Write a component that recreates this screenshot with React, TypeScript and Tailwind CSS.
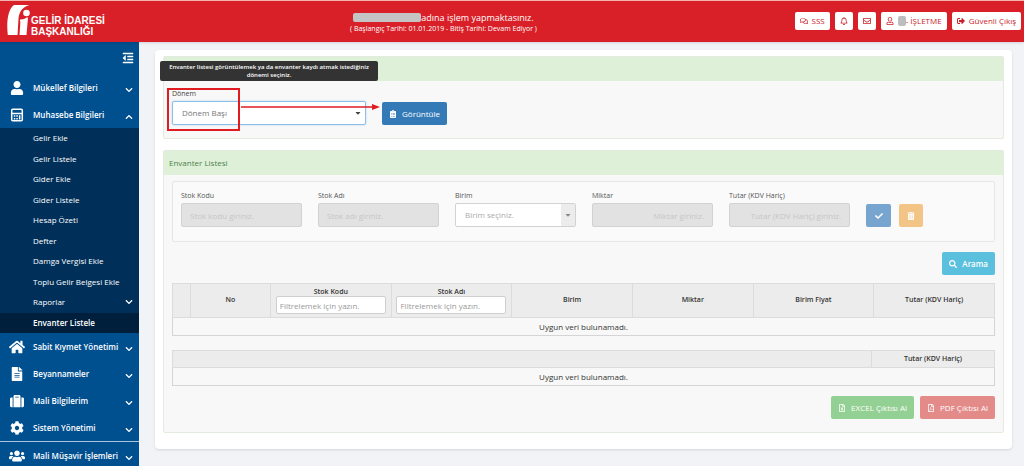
import React from "react";
import {
  FaUser, FaHome, FaSuitcase, FaCog, FaUsers, FaOutdent, FaRegComments,
  FaRegBell, FaRegEnvelope, FaRegUser, FaCheck, FaSearch, FaChevronDown, FaChevronUp,
  FaRegFileExcel, FaRegFilePdf, FaCaretDown, FaClipboardList, FaFileAlt, FaSignOutAlt, FaTrashAlt,
} from "react-icons/fa";

function Logo() {
  return (
    <a href="#" className="flex items-start text-white">
      <svg viewBox="0 0 24 32" className="h-8 w-6" aria-hidden="true">
        <path d="M7 1h15.500c-6 1.500-10.300 6-11 13.500L10.500 31H.8C-.6 19 .4 6 7 1z" fill="#fff" />
        <circle cx="19.500" cy="9" r="3.300" fill="#fff" />
        <path d="M13 15.500c3 .2 5-.8 6.500-2h1.500L19.500 31h-7l.9-13.500H13z" fill="#fff" />
      </svg>
      <span className="mt-[11px] flex flex-col font-['Liberation_Sans',sans-serif] text-[10px] leading-[11px] font-bold">
        <span>GELİR İDARESİ</span>
        <span>BAŞKANLIĞI</span>
      </span>
    </a>
  );
}

function CalculatorIcon({ className }: { className?: string }) {
  return (
    <svg viewBox="0 0 14 14" className={className} aria-hidden="true">
      <rect x="1.700" y="1.200" width="10.600" height="11.600" rx="1" fill="none" stroke="currentColor" strokeWidth="1.500" />
      <path d="M2 5.500h10" stroke="currentColor" strokeWidth="1.500" />
      <path
        d="M3.800 7.200h1.500v1.500H3.800zM6.300 7.200h1.500v1.500H6.300zM8.900 7.200h1.500v4.400H8.900zM3.800 10h1.500v1.500H3.800zM6.300 10h1.500v1.500H6.300z"
        fill="currentColor"
      />
    </svg>
  );
}

const headerButton =
  "flex h-[18px] items-center gap-1 rounded-xs bg-white px-[5px] text-[8px] font-medium text-[#c9222b]";

function Header() {
  return (
    <header className="relative z-10 grid h-[42px] shrink-0 grid-cols-[1fr_auto_1fr] border-t border-[#f3b3ae] bg-[#d91f27] shadow-sm">
      <div className="pt-[3px] pl-[7px]">
        <Logo />
      </div>
      <div className="flex flex-col items-center pt-2.5 pr-[137px] text-white">
        <p className="flex items-center text-[9px] leading-[13px]">
          <span className="h-[9px] w-[68px] rounded-xs bg-[#c4c4c4]" />
          <span>adına işlem yapmaktasınız.</span>
        </p>
        <p className="text-[7px] leading-[10px] font-medium">( Başlangıç Tarihi: 01.01.2019 - Bitiş Tarihi: Devam Ediyor )</p>
      </div>
      <div className="flex items-start justify-end gap-[5px] pt-[11px] pr-[3px]">
        <button className={headerButton}><FaRegComments className="size-2" />SSS</button>
        <button className={headerButton} aria-label="Bildirimler"><FaRegBell className="size-2" /></button>
        <button className={headerButton} aria-label="Mesajlar"><FaRegEnvelope className="size-2" /></button>
        <button className={headerButton}>
          <FaRegUser className="size-2" />
          <span className="flex items-center"><span className="h-2.5 w-2 rounded-xs bg-[#bdbdbd]" />- İŞLETME</span>
        </button>
        <button className={headerButton}><FaSignOutAlt className="size-2" />Güvenli Çıkış</button>
      </div>
    </header>
  );
}

type Icon = React.ComponentType<{ className?: string }>;

function MenuItem({ icon: Icon, label, open }: { icon: Icon; label: string; open?: boolean }) {
  const Chevron = open ? FaChevronUp : FaChevronDown;
  return (
    <a href="#" className="flex h-[27px] items-center pr-1.5 pl-[9px] font-semibold">
      <span className="flex w-4 justify-center">
        <Icon className={Icon === FaUsers || Icon === FaHome ? "size-4" : "size-3.5"} />
      </span>
      <span className="ml-2 grow">{label}</span>
      <Chevron className="mt-1 size-2" />
    </a>
  );
}

const subItems = [
  "Gelir Ekle", "Gelir Listele", "Gider Ekle", "Gider Listele", "Hesap Özeti", "Defter",
  "Damga Vergisi Ekle", "Toplu Gelir Belgesi Ekle", "Raporlar", "Envanter Listele",
];

function Sidebar() {
  return (
    <nav className="w-[139px] shrink-0 bg-[#00508f] text-[8px] whitespace-nowrap text-white">
      <div className="flex h-8 items-center justify-end pr-[5px]">
        <button aria-label="Menüyü daralt"><FaOutdent className="size-3" /></button>
      </div>
      <MenuItem icon={FaUser} label="Mükellef Bilgileri" />
      <MenuItem icon={CalculatorIcon} label="Muhasebe Bilgileri" open />
      <div className="grid h-[205px] auto-rows-fr bg-[#00305a]">
        {subItems.map((item) => (
          <a
            key={item}
            href="#"
            className={
              item === "Envanter Listele"
                ? "flex items-center bg-[#001f3c] pr-1.5 pl-[33px] font-semibold"
                : "flex items-center justify-between pr-1.5 pl-[33px]"
            }
          >
            {item}
            {item === "Raporlar" && <FaChevronDown className="size-2" />}
          </a>
        ))}
      </div>
      <MenuItem icon={FaHome} label="Sabit Kıymet Yönetimi" />
      <MenuItem icon={FaFileAlt} label="Beyannameler" />
      <MenuItem icon={FaSuitcase} label="Mali Bilgilerim" />
      <MenuItem icon={FaCog} label="Sistem Yönetimi" />
      <div className="border-t border-[#a9c4dc]">
        <MenuItem icon={FaUsers} label="Mali Müşavir İşlemleri" />
      </div>
    </nav>
  );
}

const actionButton = "flex h-[23px] items-center gap-[5px] rounded-xs px-[7px] text-[8px] text-white";

function PeriodPanel() {
  return (
    <section className="rounded-xs border border-[#e3ebdf] bg-[#f8f8f8]">
      <div className="h-6 bg-[#dff0d8]" />
      <div className="relative flex h-[57px] items-end gap-4 pb-[13px] pl-2">
        <div className="w-[194px]">
          <label htmlFor="donem" className="block text-[7px] leading-[14px] text-[#444]">Dönem</label>
          <div className="relative">
            <select
              id="donem"
              className="block h-6 w-full appearance-none rounded-xs border border-[#8ebfe8] bg-white pl-[9px] text-[8px] text-[#777] shadow-[0_0_2px_#a5cdf0]"
            >
              <option>Dönem Başı</option>
            </select>
            <FaCaretDown className="pointer-events-none absolute top-2 right-1 size-2 text-[#444]" />
          </div>
        </div>
        <button className={`${actionButton} bg-[#337ab7]`}><FaClipboardList className="size-2" />Görüntüle</button>
        <div
          role="tooltip"
          className="absolute -top-5 -left-1 w-[218px] rounded-xs bg-[#333] px-1 py-0.5 text-center text-[6px] leading-2 font-semibold text-white"
        >
          Envanter listesi görüntülemek ya da envanter kaydı atmak istediğiniz dönemi seçiniz.
        </div>
        <div className="pointer-events-none absolute top-[7px] left-[3px] h-[43px] w-[73px] border-2 border-[#e01b22]" />
        <svg viewBox="0 0 140 8" className="pointer-events-none absolute top-[22px] left-[77px] h-2 w-[140px]" aria-hidden="true">
          <path d="M0 4h133" stroke="#e01b22" strokeWidth="1.500" />
          <path d="M131 1l8 3-8 3z" fill="#e01b22" />
        </svg>
      </div>
    </section>
  );
}

function Field({ id, label, placeholder, right }: { id: string; label: string; placeholder: string; right?: boolean }) {
  return (
    <div className="grow basis-0">
      <label htmlFor={id} className="block text-[7px] leading-[14px] text-[#555]">{label}</label>
      <input
        id={id}
        disabled
        placeholder={placeholder}
        className={
          right
            ? "block h-6 w-full rounded-xs border border-[#d2d2d2] bg-[#e2e2e2] px-2 text-right text-[8px] placeholder:text-[#c6c6c6]"
            : "block h-6 w-full rounded-xs border border-[#d2d2d2] bg-[#e2e2e2] px-2 text-[8px] placeholder:text-[#c6c6c6]"
        }
      />
    </div>
  );
}

function EntryForm() {
  return (
    <form className="flex h-[61px] items-end gap-4 rounded-xs border border-[#e6e6e6] bg-[#fafafa] pr-[71px] pb-3.5 pl-2">
      <Field id="kod" label="Stok Kodu" placeholder="Stok kodu giriniz." />
      <Field id="ad" label="Stok Adı" placeholder="Stok adı giriniz." />
      <div className="grow basis-0">
        <label htmlFor="birim" className="block text-[7px] leading-[14px] text-[#555]">Birim</label>
        <div className="relative">
          <select id="birim" className="block h-6 w-full appearance-none rounded-xs border border-[#d2d2d2] bg-white pl-[9px] text-[8px] text-[#aaa]">
            <option>Birim seçiniz.</option>
          </select>
          <span className="pointer-events-none absolute inset-y-px right-px flex w-3.5 items-center justify-center bg-[#ececec]">
            <FaCaretDown className="size-2 text-[#888]" />
          </span>
        </div>
      </div>
      <Field id="miktar" label="Miktar" placeholder="Miktar giriniz." right />
      <Field id="tutar" label="Tutar (KDV Hariç)" placeholder="Tutar (KDV Hariç) giriniz." right />
      <div className="flex gap-2">
        <button type="button" aria-label="Onayla" className="flex h-[23px] w-[25px] items-center justify-center rounded-xs bg-[#78a5cf] text-white">
          <FaCheck className="size-2" />
        </button>
        <button type="button" aria-label="Temizle" className="flex h-[23px] w-6 items-center justify-center rounded-xs bg-[#f2c586] text-white">
          <FaTrashAlt className="size-2" />
        </button>
      </div>
    </form>
  );
}

const th = "border border-[#dcdcdc] p-0 text-center font-semibold";
const filterInput =
  "mx-auto block h-[18px] w-[110px] rounded-xs border border-[#cfcfcf] bg-white px-[3px] text-[8px] font-normal placeholder:text-[#999]";

function Tables() {
  return (
    <>
      <table className="mt-2 w-full table-fixed border-collapse border border-[#d5d5d5] text-[7px] text-[#333]">
        <colgroup>
          <col className="w-[18px]" />
          <col className="w-20" />
          <col span={6} />
        </colgroup>
        <thead>
          <tr className="h-[34px] bg-[#ececec]">
            <th className={th} />
            <th className={th}>No</th>
            <th className={th}>
              <label className="block leading-[9px]">Stok Kodu<input placeholder="Filtrelemek için yazın." className={filterInput} /></label>
            </th>
            <th className={th}>
              <label className="block leading-[9px]">Stok Adı<input placeholder="Filtrelemek için yazın." className={filterInput} /></label>
            </th>
            <th className={th}>Birim</th>
            <th className={th}>Miktar</th>
            <th className={th}>Birim Fiyat</th>
            <th className={th}>Tutar (KDV Hariç)</th>
          </tr>
        </thead>
        <tbody>
          <tr className="h-[18px]">
            <td colSpan={8} className="p-0 text-center text-[8px] leading-4">Uygun veri bulunamadı.</td>
          </tr>
        </tbody>
      </table>
      <table className="mt-3.5 w-full table-fixed border-collapse border border-[#d5d5d5] text-[7px] text-[#333]">
        <colgroup>
          <col />
          <col className="w-[123px]" />
        </colgroup>
        <thead>
          <tr className="h-[17px] bg-[#ececec]">
            <th className={th} />
            <th className={th}>Tutar (KDV Hariç)</th>
          </tr>
        </thead>
        <tbody>
          <tr className="h-[18px]">
            <td colSpan={2} className="p-0 text-center text-[8px] leading-4">Uygun veri bulunamadı.</td>
          </tr>
        </tbody>
      </table>
    </>
  );
}

function InventoryPanel() {
  return (
    <section className="mt-[11px] rounded-xs border border-[#e3ebdf] bg-[#f8f8f8]">
      <h2 className="flex h-6 items-center bg-[#dff0d8] pl-[5px] text-[8px] text-[#4b804c]">Envanter Listesi</h2>
      <div className="px-2 pt-1.5 pb-[13px]">
        <EntryForm />
        <div className="mt-2.5 flex justify-end">
          <button className={`${actionButton} bg-[#5bc0de]`}><FaSearch className="size-2" /><span className="font-semibold">Arama</span></button>
        </div>
        <Tables />
        <div className="mt-2.5 flex justify-end gap-1.5">
          <button className={`${actionButton} bg-[#93d093]`}><FaRegFileExcel className="size-2" />EXCEL Çıktısı Al</button>
          <button className={`${actionButton} bg-[#e38b89]`}><FaRegFilePdf className="size-2" />PDF Çıktısı Al</button>
        </div>
      </div>
    </section>
  );
}

export default function App() {
  return (
    <div className="flex h-screen flex-col overflow-hidden bg-[#f1f3f7] font-['Open_Sans',sans-serif]">
      <Header />
      <div className="flex min-h-0 grow">
        <Sidebar />
        <main className="min-w-0 grow pt-2 pr-3 pl-4">
          <div className="rounded-sm bg-white px-2 pt-1.5 pb-4 shadow-sm">
            <PeriodPanel />
            <InventoryPanel />
          </div>
        </main>
      </div>
    </div>
  );
}
